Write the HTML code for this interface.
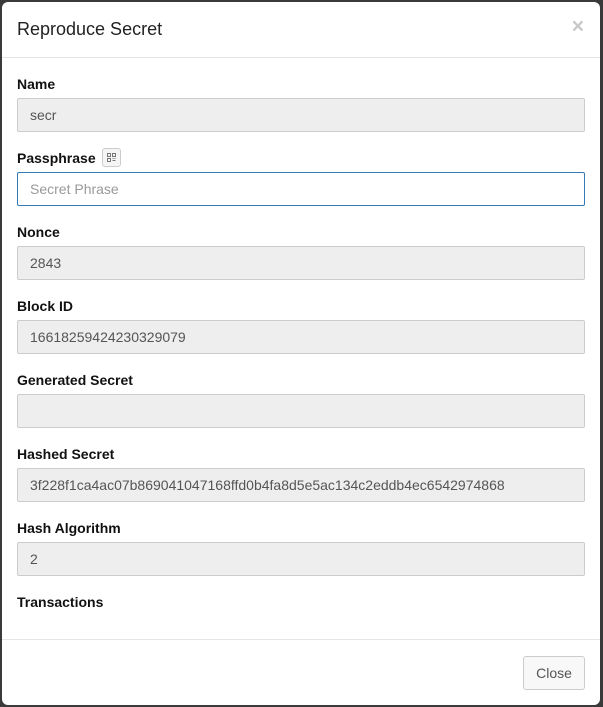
<!DOCTYPE html>
<html><head><style>
*{box-sizing:border-box}
body{margin:0;width:603px;height:707px;background:#3a3a3a;font-family:"Liberation Sans",Arial,sans-serif;font-size:14px;color:#333;overflow:hidden;position:relative}
.modal{position:absolute;left:2px;top:2px;width:598px;height:703px;background:#fff;border-radius:6px}
.hdr{height:56px;border-bottom:1px solid #e5e5e5;position:relative}
.hdr h4{margin:0;position:absolute;left:15px;top:17px;font-size:18px;font-weight:normal;color:#222}
.x{position:absolute;right:16px;top:13px;font-size:21px;font-weight:bold;color:#c8c8c8}
.body{padding:17px 15px 0 15px}
label{display:block;font-weight:bold;font-size:14px;height:18px;line-height:18px;margin-bottom:5px;color:#111;overflow:visible;white-space:nowrap}
.inp{height:34px;border:1px solid #ccc;background:#eee;border-radius:2px;padding:8px 12px;color:#555;margin-bottom:17px;line-height:16px}
.inp.w{background:#fff;border-color:#337ab7;color:#999}
.qr{display:inline-block;width:19px;height:19px;border:1px solid #ccc;border-radius:3px;background:#f5f5f5;vertical-align:top;margin-left:2px;margin-top:-1px;position:relative}
.qr svg{position:absolute;left:4px;top:4px}
.ftr{position:absolute;left:0;right:0;top:637px;border-top:1px solid #e5e5e5;height:66px}
.btn{position:absolute;right:15px;top:16px;width:62px;height:34px;border:1px solid #ccc;border-radius:3px;background:#f8f8f8;color:#555;text-align:center;line-height:32px}
</style></head><body>
<div class="modal">
<div class="hdr"><h4>Reproduce Secret</h4><span class="x">×</span></div>
<div class="body">
<label>Name</label><div class="inp">secr</div>
<label>Passphrase <span class="qr"><svg width="9" height="9" viewBox="0 0 9 9" fill="none" stroke="#777" stroke-width="1"><rect x="0.5" y="0.5" width="3" height="3"/><rect x="5.5" y="0.5" width="3" height="3"/><rect x="0.5" y="5.5" width="3" height="3"/><path d="M5.5 5.5h1M7.5 5.5h1M5.5 7.5h3"/></svg></span></label><div class="inp w">Secret Phrase</div>
<label>Nonce</label><div class="inp">2843</div>
<label>Block ID</label><div class="inp">16618259424230329079</div>
<label>Generated Secret</label><div class="inp"></div>
<label>Hashed Secret</label><div class="inp">3f228f1ca4ac07b869041047168ffd0b4fa8d5e5ac134c2eddb4ec6542974868</div>
<label>Hash Algorithm</label><div class="inp">2</div>
<label>Transactions</label>
</div>
<div class="ftr"><div class="btn">Close</div></div>
</div>
</body></html>
